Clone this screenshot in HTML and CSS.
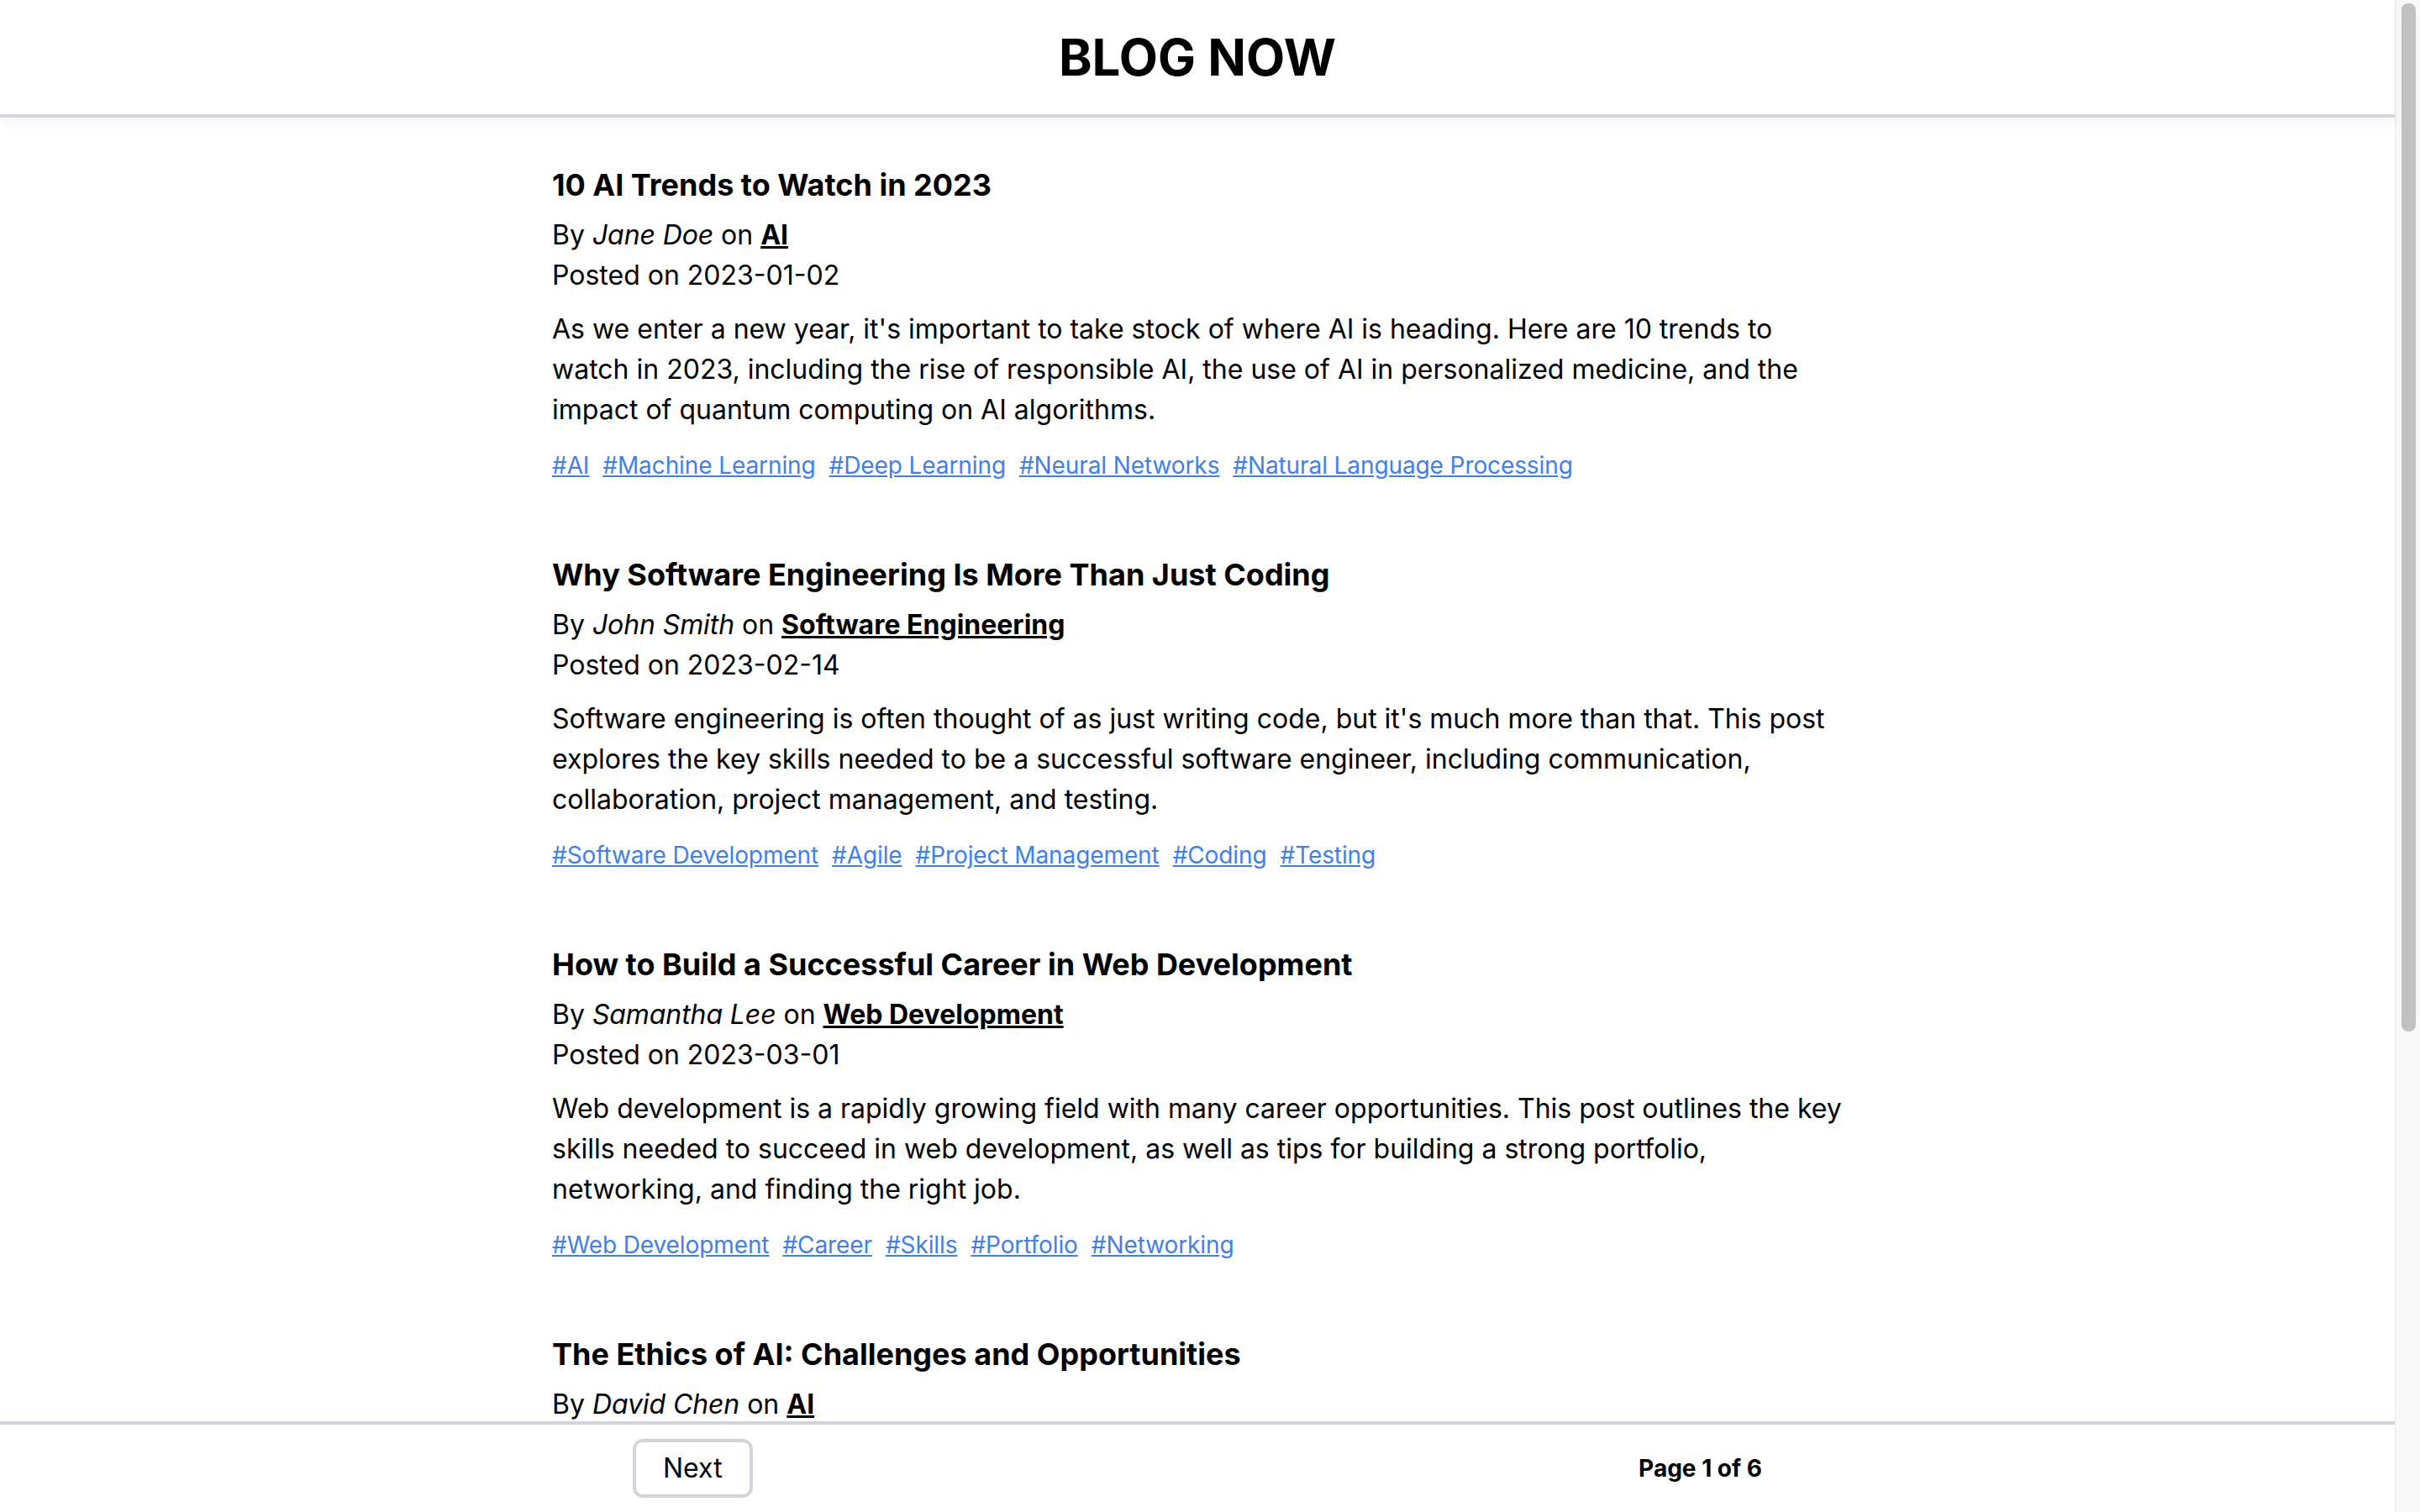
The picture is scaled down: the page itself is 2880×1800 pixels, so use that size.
FILE: index.html
```html
<!DOCTYPE html>
<html lang="en">
<head>
<meta charset="utf-8">
<title>Blog Now</title>
<link rel="stylesheet" href="styles.css">
</head>
<body>
<div class="frame">
  <div class="app">
    <header class="topbar">
      <h1 class="brand">BLOG NOW</h1>
    </header>
    <main class="feed">
      <div class="feed-inner">
        <article class="post">
          <h2 class="post-title">10 AI Trends to Watch in 2023</h2>
          <div class="byline">By <em>Jane Doe</em> on <a class="category" href="#">AI</a></div>
          <div class="date">Posted on 2023-01-02</div>
          <p class="excerpt">As we enter a new year, it's important to take stock of where AI is heading. Here are 10 trends to watch in 2023, including the rise of responsible AI, the use of AI in personalized medicine, and the impact of quantum computing on AI algorithms.</p>
          <div class="tags">
            <a class="tag" href="#">#AI</a><a class="tag" href="#">#Machine Learning</a><a class="tag" href="#">#Deep Learning</a><a class="tag" href="#">#Neural Networks</a><a class="tag" href="#">#Natural Language Processing</a>
          </div>
        </article>
        <article class="post">
          <h2 class="post-title">Why Software Engineering Is More Than Just Coding</h2>
          <div class="byline">By <em>John Smith</em> on <a class="category" href="#">Software Engineering</a></div>
          <div class="date">Posted on 2023-02-14</div>
          <p class="excerpt">Software engineering is often thought of as just writing code, but it's much more than that. This post explores the key skills needed to be a successful software engineer, including communication, collaboration, project management, and testing.</p>
          <div class="tags">
            <a class="tag" href="#">#Software Development</a><a class="tag" href="#">#Agile</a><a class="tag" href="#">#Project Management</a><a class="tag" href="#">#Coding</a><a class="tag" href="#">#Testing</a>
          </div>
        </article>
        <article class="post">
          <h2 class="post-title">How to Build a Successful Career in Web Development</h2>
          <div class="byline">By <em>Samantha Lee</em> on <a class="category" href="#">Web Development</a></div>
          <div class="date">Posted on 2023-03-01</div>
          <p class="excerpt">Web development is a rapidly growing field with many career opportunities. This post outlines the key skills needed to succeed in web development, as well as tips for building a strong portfolio, networking, and finding the right job.</p>
          <div class="tags">
            <a class="tag" href="#">#Web Development</a><a class="tag" href="#">#Career</a><a class="tag" href="#">#Skills</a><a class="tag" href="#">#Portfolio</a><a class="tag" href="#">#Networking</a>
          </div>
        </article>
        <article class="post">
          <h2 class="post-title">The Ethics of AI: Challenges and Opportunities</h2>
          <div class="byline">By <em>David Chen</em> on <a class="category" href="#">AI</a></div>
        </article>
      </div>
    </main>
    <footer class="pager">
      <div class="pager-inner">
        <button class="btn" type="button">Next</button>
        <span class="page-count">Page 1 of 6</span>
      </div>
    </footer>
  </div>
  <div class="scrollbar"><div class="thumb"></div></div>
</div>
</body>
</html>
```

FILE: styles.css
```css
html, body {
  margin: 0;
  padding: 0;
  height: 100%;
  overflow: hidden;
  background: #ffffff;
}

body {
  font-family: Inter, "Noto Sans", "Liberation Sans", sans-serif;
  color: #000000;
}

.frame {
  display: flex;
  height: 100vh;
}

.app {
  flex: 1;
  min-width: 0;
  display: flex;
  flex-direction: column;
}

.topbar {
  position: relative;
  z-index: 2;
  flex: none;
  height: 136px;
  display: flex;
  align-items: center;
  justify-content: center;
  background: #ffffff;
  border-bottom: 4px solid #d3d5da;
  box-shadow: 0 6px 14px rgba(0, 0, 0, 0.05);
}

.brand {
  margin: 0;
  font-size: 60px;
  line-height: 72px;
  font-weight: 700;
}

.feed {
  flex: 1;
  min-height: 0;
  overflow: hidden;
}

.feed-inner {
  max-width: 1536px;
  margin: 0 auto;
  padding-top: 52px;
}

.post {
  margin-bottom: 82px;
}

.post-title {
  margin: 0 0 8px;
  font-size: 36px;
  line-height: 56px;
  font-weight: 700;
}

.byline,
.date {
  font-size: 32px;
  line-height: 48px;
}

.byline em {
  font-style: italic;
  letter-spacing: -0.1px;
}

.category {
  color: #000000;
  font-weight: 700;
  text-decoration: underline;
}

.excerpt {
  margin: 16px 0 0;
  font-size: 32px;
  line-height: 48px;
}

.tags {
  margin-top: 22px;
  font-size: 28px;
  line-height: 40px;
  letter-spacing: -0.1px;
}

.tag {
  color: #3f7fec;
  text-decoration: underline;
  margin-right: 16px;
}

.pager {
  flex: none;
  height: 104px;
  border-top: 4px solid #d1d5db;
  background: #ffffff;
}

.pager-inner {
  max-width: 1536px;
  height: 100%;
  margin: 0 auto;
  padding: 0 96px;
  box-sizing: border-box;
  display: flex;
  align-items: center;
  justify-content: space-between;
}

.btn {
  font-family: inherit;
  font-size: 32px;
  line-height: 48px;
  color: #000000;
  background: #ffffff;
  border: 4px solid #d1d5db;
  border-radius: 12px;
  padding: 7px 32px;
}

.page-count {
  font-size: 28px;
  line-height: 40px;
  font-weight: 700;
}

.scrollbar {
  flex: none;
  width: 30px;
  box-sizing: border-box;
  background: #f8f8f8;
  border-left: 1px solid #e8e8e8;
  padding: 4px 5px 0 7px;
}

.thumb {
  height: 1224px;
  border-radius: 8px;
  background: #c1c1c1;
}
```
